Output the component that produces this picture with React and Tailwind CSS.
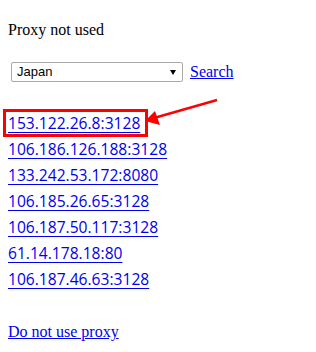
export default function App() {
  const ips = [
    "153.122.26.8:3128",
    "106.186.126.188:3128",
    "133.242.53.172:8080",
    "106.185.26.65:3128",
    "106.187.50.117:3128",
    "61.14.178.18:80",
    "106.187.46.63:3128",
  ];
  return (
    <div className="relative w-[316px] h-[352px] bg-white overflow-hidden">
      <div className="pt-[21px] pl-2 font-['Liberation_Serif',serif] text-[16px] leading-[18px] text-black">
        Proxy not used
      </div>
      <div className="mt-[23px] ml-[11px] flex items-center h-[20px]">
        <div className="w-[172px] h-[20px] border border-[#a9a9a9] rounded-[2px] flex items-center justify-between pl-[5px] pr-[6px] font-['Liberation_Sans',sans-serif] text-[13px] text-black">
          <span>Japan</span>
          <svg width="6" height="5" viewBox="0 0 6 5">
            <path d="M0 0 H6 L3 5 Z" fill="#000" />
          </svg>
        </div>
        <a href="#" className="ml-[7px] font-['Liberation_Serif',serif] text-[16px] leading-[18px] text-[#0000ee] underline">
          Search
        </a>
      </div>
      <div className="mt-[28px] pl-2 flex flex-col font-['Open_Sans',sans-serif] text-[15.6px] leading-[26px]">
        {ips.map((ip) => (
          <div key={ip} className="h-[26px]">
            <a href="#" className="text-[#0000ee] underline underline-offset-[3px] decoration-1">
              {ip}
            </a>
          </div>
        ))}
      </div>
      <div className="mt-[31px] pl-2 font-['Liberation_Serif',serif] text-[16px] leading-[18px]">
        <a href="#" className="text-[#0000ee] underline">Do not use proxy</a>
      </div>

      <div className="absolute left-[3px] top-[109px] w-[145px] h-[28px] border-[3px] border-[#ff0000]" />
      <svg className="absolute left-0 top-0" width="316" height="352" viewBox="0 0 316 352">
        <line x1="217" y1="100" x2="154" y2="118" stroke="#ff0000" strokeWidth="2.5" />
        <path d="M145 121 L155 111 L160 125 Z" fill="#ff0000" />
      </svg>
    </div>
  );
}
